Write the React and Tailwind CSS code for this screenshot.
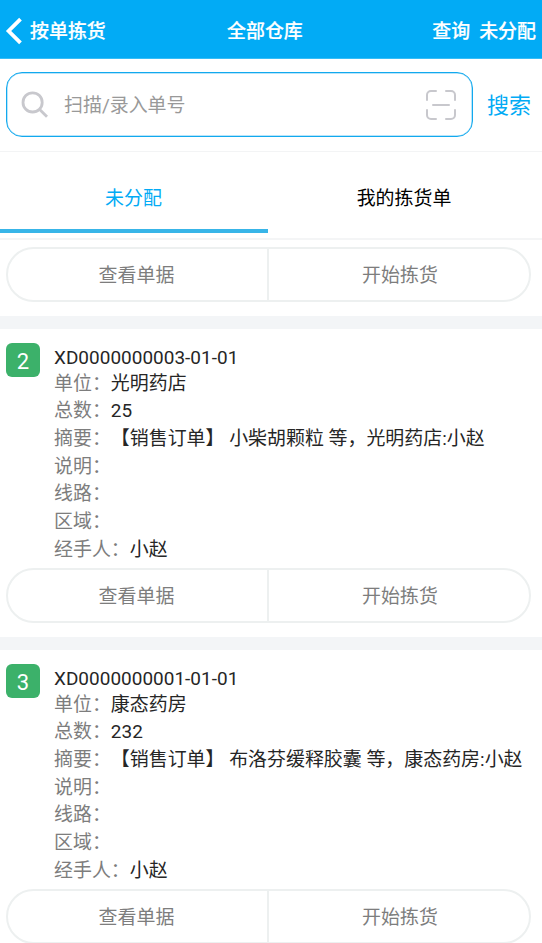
const orders = [
  {
    index: 2,
    code: 'XD0000000003-01-01',
    unit: '光明药店',
    total: '25',
    summary: '【销售订单】 小柴胡颗粒 等，光明药店:小赵',
    handler: '小赵',
  },
  {
    index: 3,
    code: 'XD0000000001-01-01',
    unit: '康态药房',
    total: '232',
    summary: '【销售订单】 布洛芬缓释胶囊 等，康态药房:小赵',
    handler: '小赵',
  },
];

function Header() {
  return (
    <header className="flex h-[59px] items-center border-b border-[#35bdf7] bg-[#02abf5] pt-1.5 font-medium text-white [-webkit-text-stroke:0.2px_white]">
      <div className="flex w-[227px] items-center pl-[5px]">
        <svg className="mr-[7px] -mt-0.5 h-7 w-[18px]" viewBox="0 0 18 28" fill="none" stroke="currentColor" strokeWidth="3.8">
          <path d="M15.5 2.2 3.6 14l11.9 11.8" />
        </svg>
        <span>按单拣货</span>
      </div>
      <h1>全部仓库</h1>
      <div className="flex flex-1 justify-end gap-[9px] pr-[6px]">
        <span>查询</span>
        <span>未分配</span>
      </div>
    </header>
  );
}

function SearchBar() {
  return (
    <div className="flex h-[93px] items-start border-b border-[#f3f4f5] pt-[13px] pl-1.5">
      <div className="flex h-[65px] w-[467px] items-center rounded-[16px] border border-[#12a9ee] pr-4 pl-[14px] ring-[0.5px] ring-[#12a9ee]/60 ring-inset">
        <svg className="h-[28px] w-[28px]" viewBox="0 0 28 28" fill="none" stroke="#c8c8cd" strokeWidth="2.8">
          <circle cx="11.6" cy="11.4" r="9.6" />
          <path d="m18.4 18.2 7.6 7.6" />
        </svg>
        <span className="ml-[15px] flex-1 pt-0.5 text-[#999]">扫描/录入单号</span>
        <svg className="h-[30px] w-[30px]" viewBox="0 0 30 30" fill="none" stroke="#c8c8cd" strokeWidth="2" strokeLinecap="round">
          <path d="M1 10V5a4 4 0 0 1 4-4h5M20 1h5a4 4 0 0 1 4 4v5M29 20v5a4 4 0 0 1-4 4h-5M10 29H5a4 4 0 0 1-4-4v-5M7 15h16" />
        </svg>
      </div>
      <button className="ml-[14px] h-[65px] pt-0.5 text-[22px] text-[#02abf5]">搜索</button>
    </div>
  );
}

function Tabs() {
  return (
    <nav className="flex h-[88px] border-b-2 border-[#f4f5f6] pb-[5px]">
      <button className="w-[268px] border-b-4 border-[#38b5e8] pt-[16px] pr-px text-[#02abf5]">未分配</button>
      <button className="flex-1 pt-[12px] pr-0.5 text-black">我的拣货单</button>
    </nav>
  );
}

function Actions() {
  return (
    <div className="mx-1.5 mr-[11px] flex h-[55px] shrink-0 rounded-full border-2 border-[#edf0f0] text-[#7d7d7d]">
      <button className="w-[261px] border-r-2 border-[#edf0f0] pt-[3px] pr-0.5">查看单据</button>
      <button className="flex-1 pt-[3px] pl-0.5">开始拣货</button>
    </div>
  );
}

function Field({ label, value }) {
  return (
    <div className="flex h-[27.65px] items-center whitespace-nowrap">
      <span className="text-[#7d7d7d]">{label}：</span>
      <span>{value}</span>
    </div>
  );
}

function Order({ order }) {
  return (
    <article className="h-[321px] border-t-[13px] border-[#f3f5f7] pt-[14px]">
      <div className="flex h-[225px] pl-1.5">
        <div className="mr-[14px] flex h-[34px] w-[34px] items-center justify-center rounded-[6px] bg-[#3cb16a] pt-[3px] text-[22px] text-white">
          {order.index}
        </div>
        <div className="text-[#262626]">
          <div className="flex h-[27px] items-center pt-[2px] tracking-[0.03px]">{order.code}</div>
          <Field label="单位" value={order.unit} />
          <Field label="总数" value={order.total} />
          <Field label="摘要" value={order.summary} />
          <Field label="说明" />
          <Field label="线路" />
          <Field label="区域" />
          <Field label="经手人" value={order.handler} />
        </div>
      </div>
      <Actions />
    </article>
  );
}

export default function App() {
  return (
    <div className="h-[943px] w-[542px] overflow-hidden bg-white font-['Roboto','Noto_Sans_CJK_SC',sans-serif] text-[18.95px] leading-[26px]" lang="zh-CN">
      <Header />
      <SearchBar />
      <Tabs />
      <main>
        <div className="h-[76px] pt-[7px]">
          <Actions />
        </div>
        {orders.map((order) => (
          <Order key={order.index} order={order} />
        ))}
      </main>
    </div>
  );
}
